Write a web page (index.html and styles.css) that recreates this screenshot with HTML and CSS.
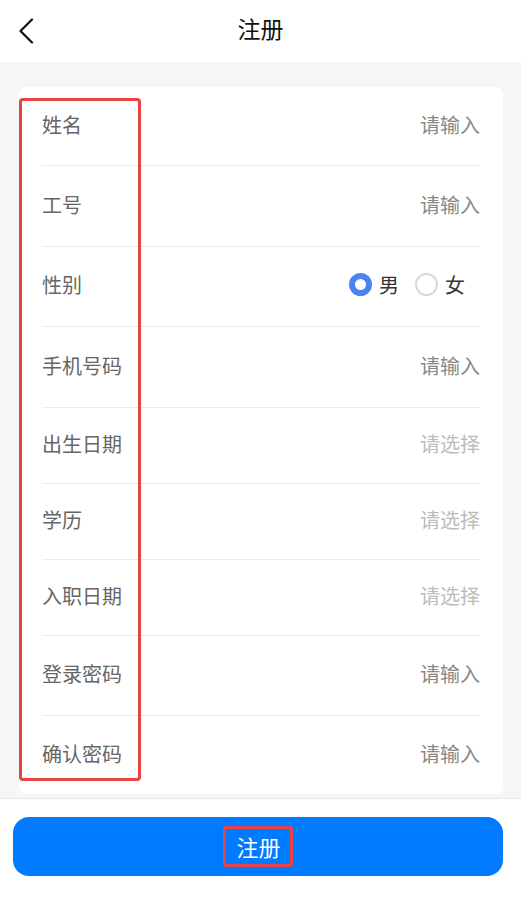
FILE: index.html
```html
<!DOCTYPE html>
<html lang="zh-CN">
<head>
<meta charset="utf-8">
<title>注册</title>
<link rel="stylesheet" href="styles.css">
</head>
<body>
<div class="page">
  <header class="navbar">
    <div class="nav-left">
      <svg class="back" width="16" height="26" viewBox="0 0 16 26"><path d="M14 1.5 L2.5 13 L14 24.5" fill="none" stroke="#111" stroke-width="2.2" stroke-linecap="round" stroke-linejoin="round"/></svg>
    </div>
    <div class="nav-title">注册</div>
    <div class="nav-right"></div>
  </header>

  <main class="content">
    <section class="card">
      <div class="row first"><span class="label">姓名</span><span class="ph">请输入</span></div>
      <div class="row"><span class="label">工号</span><span class="ph">请输入</span></div>
      <div class="row"><span class="label">性别</span>
        <span class="radios">
          <span class="radio checked"><i class="dot"></i>男</span>
          <span class="radio"><i class="dot"></i>女</span>
        </span>
      </div>
      <div class="row"><span class="label">手机号码</span><span class="ph">请输入</span></div>
      <div class="row select"><span class="label">出生日期</span><span class="ph light">请选择</span></div>
      <div class="row select"><span class="label">学历</span><span class="ph light">请选择</span></div>
      <div class="row select"><span class="label">入职日期</span><span class="ph light">请选择</span></div>
      <div class="row"><span class="label">登录密码</span><span class="ph">请输入</span></div>
      <div class="row last"><span class="label">确认密码</span><span class="ph">请输入</span></div>
      <div class="highlight"></div>
    </section>
  </main>

  <footer class="footer">
    <button class="submit"><span class="submit-text">注册</span></button>
  </footer>
</div>
</body>
</html>
```

FILE: styles.css
```css
* { box-sizing: border-box; }
html, body { margin: 0; padding: 0; background: #fff; }
body {
  font-family: "Noto Sans CJK SC", "Noto Sans", sans-serif;
  color: #333;
}
.page { width: 521px; min-height: 899px; display: flex; flex-direction: column; }

.navbar {
  height: 62px;
  display: grid;
  grid-template-columns: 1fr auto 1fr;
  align-items: center;
  background: #fff;
}
.nav-left { padding-left: 18px; display: flex; align-items: center; }
.back { display: block; }
.nav-title { font-size: 23px; color: #111; line-height: 1; margin-top: -5px; }

.content {
  background: #f6f6f6;
  padding: 25px 18px 4px 19px;
}
.card {
  position: relative;
  background: #fff;
  border-radius: 8px;
  padding: 0 23px;
}
.row {
  height: 80.5px;
  display: flex;
  align-items: center;
  justify-content: space-between;
  border-bottom: 1px solid #ebebeb;
  font-size: 20px;
  padding-bottom: 3px;
}
.row.first { height: 79px; }
.row.select { height: 76px; }
.row.last { border-bottom: none; height: 78px; }
.label { color: #666; }
.ph { color: #888; }
.ph.light { color: #bcbcbc; }

.radios { display: flex; align-items: center; gap: 16px; margin-right: 15px; color: #333; }
.radio { display: flex; align-items: center; gap: 7px; }
.dot {
  width: 23px; height: 23px;
  border-radius: 50%;
  border: 2px solid #d9d9d9;
  background: #fff;
  display: inline-block;
}
.radio.checked .dot {
  border: 6.5px solid #4b82f0;
  background: #fff;
}

.highlight {
  position: absolute;
  left: 0; top: 11px;
  width: 122px; height: 683px;
  border: 3px solid #e84343;
  border-radius: 4px;
  pointer-events: none;
}

.footer {
  border-top: 1px solid #e6e6e6;
  padding: 18px 18px 0 13px;
  background: #fff;
}
.submit {
  width: 490px;
  height: 59px;
  border: none;
  border-radius: 16px;
  background: #007aff;
  color: #fff;
  font-family: inherit;
  font-size: 22px;
  display: flex;
  align-items: center;
  justify-content: center;
  padding: 0;
}
.submit-text {
  display: inline-block;
  border: 3px solid #e84343;
  border-radius: 3px;
  padding: 0 9px 0 10px;
  line-height: 35px;
}
```
